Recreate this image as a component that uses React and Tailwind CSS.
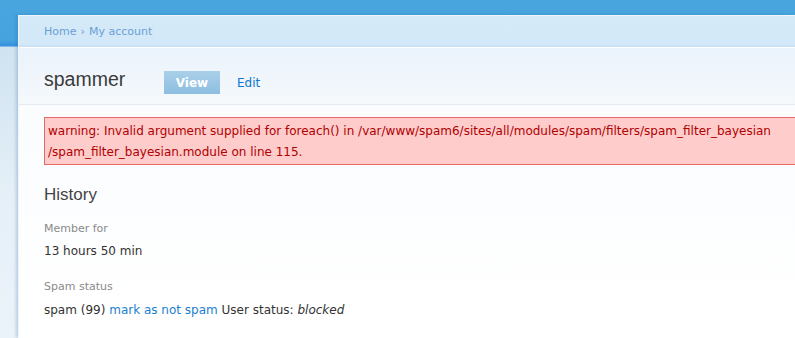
export default function App() {
  return (
    <div className="w-[795px] h-[338px] overflow-hidden bg-[linear-gradient(to_bottom,#48a5de_0px,#46a3de_40px,#3490dd_46px,#cfe3f1_47px,#e6f0f8_200px,#ebf3fa_338px)] font-['DejaVu_Sans',sans-serif]">
      <div className="ml-[18px] mt-[15px] h-[323px] border-t border-l border-[#eef6fc] bg-white shadow-[-2px_0_3px_rgba(40,100,160,0.25)]">
        <div className="h-[32px] flex items-center pl-[25px] pt-[1px] bg-[linear-gradient(to_bottom,#d5eaf8_0px,#d3e8f8_28px,#c6def4_31px)] border-b border-white text-[11px] text-[#6a9fd6]">
          <span>Home</span>
          <span className="mx-[4px]">›</span>
          <span>My account</span>
        </div>
        <div className="h-[57px] pl-[25px] pt-[19px] flex items-start border-b border-[#e4ebf2] bg-[linear-gradient(to_bottom,#eaf2fb,#f5f9fc)]">
          <h1 className="w-[120px] text-[19.5px] leading-[24px] text-[#3b3b3b] font-['Liberation_Sans',sans-serif]">spammer</h1>
          <div className="mt-[4px] h-[23px] w-[56px] flex items-center justify-center bg-[linear-gradient(to_bottom,#aad0e8,#8dbee0)] text-white font-bold text-[12px]">View</div>
          <div className="mt-[4px] ml-[17px] h-[23px] flex items-center text-[12px] text-[#0d77cf]">Edit</div>
        </div>
        <div className="pl-[25px] pt-[12px] bg-[linear-gradient(to_bottom,#fafcfe,#ffffff)]">
          <div className="w-[800px] border border-[#e86868] bg-[#ffcccc] text-[#b00000] text-[12px] leading-[21px] pt-[3px] pb-[1px] pl-[3px] whitespace-nowrap">
            warning: Invalid argument supplied for foreach() in /var/www/spam6/sites/all/modules/spam/filters/spam_filter_bayesian
            <br />
            /spam_filter_bayesian.module on line 115.
          </div>
          <h2 className="mt-[20px] text-[17px] leading-[20px] text-[#444] font-['Liberation_Sans',sans-serif]">History</h2>
          <div className="mt-[17px] text-[11px] leading-[14px] text-[#8a8a8a]">Member for</div>
          <div className="mt-[7px] text-[12px] leading-[16px] text-[#333]">13 hours 50 min</div>
          <div className="mt-[21px] text-[11px] leading-[14px] text-[#8a8a8a]">Spam status</div>
          <div className="mt-[8px] text-[12px] leading-[16px] text-[#333]">
            spam (99) <span className="text-[#1b7fd0]">mark as not spam</span> User status: <em>blocked</em>
          </div>
        </div>
      </div>
    </div>
  );
}
